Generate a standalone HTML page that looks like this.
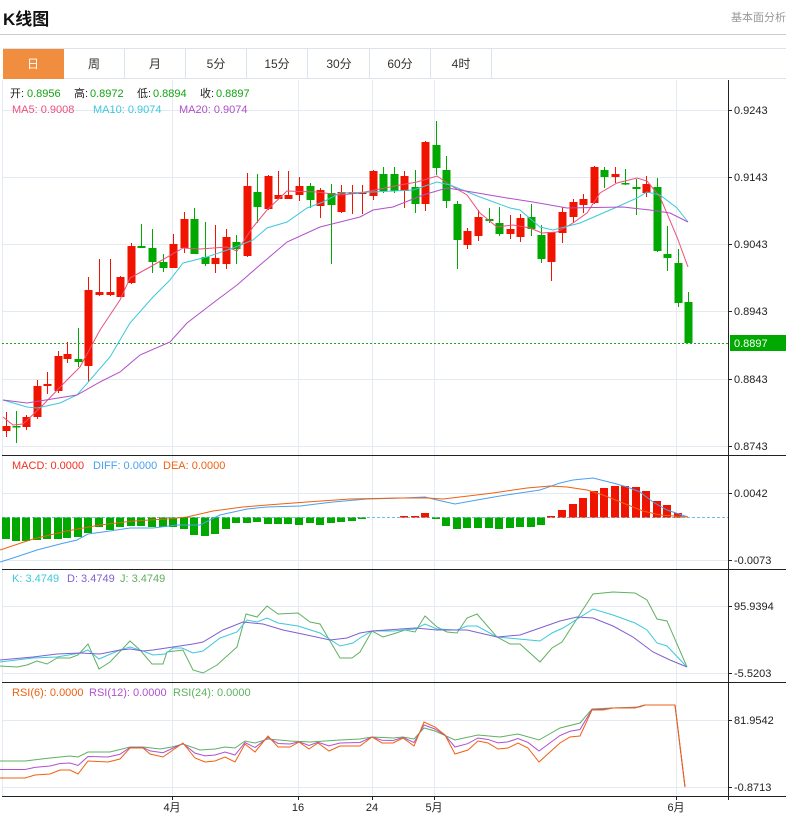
<!DOCTYPE html>
<html><head><meta charset="utf-8">
<style>
*{margin:0;padding:0;box-sizing:border-box}
body{width:786px;height:816px;background:#fff;font-family:"Liberation Sans","Noto Sans CJK SC",sans-serif;position:relative;overflow:hidden}
.t{position:absolute;white-space:nowrap}
#tabs{position:absolute;left:3px;top:48px;height:31px;width:783px;border-top:1px solid #dde3ea;border-bottom:1px solid #dde3ea}
.tab{position:absolute;top:0;height:30px;width:61px;border-right:1px solid #dde3ea;text-align:center;line-height:30px;font-size:12px;color:#333}
</style></head><body>
<div class="t" style="left:3px;top:5px;font-size:17px;font-weight:bold;color:#111">K线图</div>
<div class="t" style="left:731px;top:9px;font-size:11px;color:#999">基本面分析</div>
<div style="position:absolute;left:0;top:34px;width:786px;height:1px;background:#ccc"></div>
<div id="tabs">
<div class="tab" style="left:0;background:#f18d3f;color:#fff;border-right:1px solid #f18d3f">日</div>
<div class="tab" style="left:61px">周</div>
<div class="tab" style="left:122px">月</div>
<div class="tab" style="left:183px">5分</div>
<div class="tab" style="left:244px">15分</div>
<div class="tab" style="left:306px">30分</div>
<div class="tab" style="left:367px">60分</div>
<div class="tab" style="left:428px">4时</div>
</div>
<svg id="s" width="786" height="816" style="position:absolute;left:0;top:0" font-family="Liberation Sans, Noto Sans CJK SC, sans-serif"></svg>
<script>
var S=document.getElementById('s'),h='';
function L(x1,y1,x2,y2,c,w,d){h+='<line x1="'+x1+'" y1="'+y1+'" x2="'+x2+'" y2="'+y2+'" stroke="'+c+'" stroke-width="'+(w||1)+'"'+(d?' stroke-dasharray="'+d+'"':'')+'/>';}
function T(x,y,s,c,sz,a){h+='<text x="'+x+'" y="'+y+'" fill="'+c+'" font-size="'+(sz||11)+'"'+(a?' text-anchor="'+a+'"':'')+'>'+s+'</text>';}
function P(pts,c,w){h+='<polyline fill="none" stroke="'+c+'" stroke-width="'+(w||1)+'" points="'+pts.map(function(p){return p.join(',')}).join(' ')+'"/>';}
var G='#e4eaf1';
[110,177,244,311,379,446, 493,560, 606,673, 720,787].forEach(function(y){L(2,y+.5,728,y+.5,G);});
[172,298,372,434,676].forEach(function(x){L(x+.5,80,x+.5,796,G);});
L(2.5,80,2.5,796,G);
L(728.5,80,728.5,800,'#222');
[455,569,682,796].forEach(function(y){L(2,y+.5,786,y+.5,'#222');});
[[110,'0.9243'],[177,'0.9143'],[244,'0.9043'],[311,'0.8943'],[379,'0.8843'],[446,'0.8743'],[493,'0.0042'],[560,'-0.0073'],[606,'95.9394'],[673,'-5.5203'],[720,'81.9542'],[787,'-0.8713']].forEach(function(a){L(728,a[0]+.5,732,a[0]+.5,'#222');T(734,a[0]+4,a[1],'#222',11);});
[[172,'4月'],[298,'16'],[372,'24'],[434,'5月'],[676,'6月']].forEach(function(a){L(a[0]+.5,796,a[0]+.5,800,'#222');T(a[0],811,a[1],'#222',11,'middle');});
L(2,343.5,728,343.5,'#22a022',1,'2,2');
h+='<rect x="730" y="335" width="56" height="16" fill="#00a800"/>';T(734,347,'0.8897','#fff',11);
var C=[[6,'R',426,431,412,437],[16,'G',426,427,411,443],[26,'R',417,427,415,430],[37,'R',386,417,380,419],[47,'R',384,386,372,394],[58,'R',356,391,351,393],[67,'R',354,359,342,363],[78,'G',359,362,328,367],[88,'R',290,366,277,382],[99,'R',292,295,259,296],[110,'R',292,295,259,296],[120,'R',277,297,276,297],[131,'R',246,283,243,284],[141,'G',246,248,224,248],[152,'G',248,262,229,273],[163,'G',262,268,254,272],[173,'R',244,268,234,268],[184,'R',219,248,212,253],[194,'G',219,254,208,254],[205,'G',257,264,222,266],[215,'R',258,264,225,273],[226,'R',237,264,229,269],[236,'G',242,249,235,264],[247,'R',186,256,173,257],[257,'G',192,207,174,223],[268,'R',176,209,175,210],[278,'R',195,199,171,199],[288,'R',195,199,171,199],[299,'R',186,195,177,201],[310,'G',186,200,183,208],[320,'R',190,206,188,218],[331,'G',193,205,184,264],[341,'R',192,212,185,213],[352,'R',192,194,185,214],[362,'R',192,194,185,214],[373,'R',171,196,170,200],[383,'G',174,191,167,193],[394,'G',174,191,167,193],[404,'R',176,191,171,208],[415,'G',187,204,170,213],[425,'R',142,204,141,211],[436,'G',145,168,121,175],[446,'G',170,201,156,208],[457,'G',204,240,201,269],[467,'R',231,245,228,249],[478,'R',217,236,210,241],[489,'G',219,221,208,223],[499,'G',223,234,207,236],[510,'R',229,234,215,239],[520,'R',218,237,214,242],[531,'G',217,229,204,236],[541,'G',235,259,225,263],[551,'R',232,262,232,281],[562,'R',212,233,207,243],[573,'R',202,217,199,223],[583,'R',199,205,194,213],[594,'R',167,203,166,204],[604,'G',170,177,167,188],[615,'R',174,177,167,183],[625,'G',183,184,169,185],[636,'G',187,189,179,215],[646,'R',184,193,176,197],[657,'G',187,251,178,252],[667,'G',254,258,226,271],[678,'G',263,303,249,307],[688,'G',302,343,292,343]];
C.forEach(function(c){var col=c[1]=='R'?'#f01400':'#00a800';L(c[0]+.5,c[4],c[0]+.5,c[5],col);h+='<rect x="'+(c[0]-3.5)+'" y="'+c[2]+'" width="8" height="'+Math.max(1.5,c[3]-c[2])+'" fill="'+col+'"/>';});
P([[3,417],[13,425],[23,424],[40,408],[67,380],[80,367],[100,330],[120,300],[130,278],[150,267],[183,248],[200,249],[227,247],[237,251],[253,227],[267,210],[287,191],[317,192],[340,195],[360,193],[380,189],[400,185],[417,182],[437,176],[450,185],[467,195],[480,213],[497,227],[513,225],[530,228],[542,233],[557,232],[573,223],[587,213],[600,193],[617,183],[637,178],[647,181],[660,197],[677,237],[688,267]],'#ec4f7c');
P([[3,400],[27,407],[37,408],[60,403],[77,395],[90,380],[110,357],[130,323],[153,297],[170,280],[183,263],[207,257],[233,248],[253,240],[267,228],[287,222],[307,208],[323,202],[340,193],[373,192],[413,190],[437,182],[450,185],[480,197],[510,208],[520,210],[540,227],[553,230],[580,223],[617,207],[637,198],[647,192],[660,195],[677,208],[688,222]],'#3cc8dc');
P([[3,400],[27,403],[77,395],[100,382],[120,372],[140,355],[170,342],[187,323],[213,303],[237,285],[260,265],[287,242],[320,227],[340,222],[360,217],[373,210],[393,207],[423,195],[447,188],[460,190],[507,198],[533,202],[567,208],[623,207],[650,210],[670,213],[688,222]],'#b050c8');
T(10,97,'开:','#222',11);T(27,97,'0.8956','#13a313',11);T(74,97,'高:','#222',11);T(90,97,'0.8972','#13a313',11);T(137,97,'低:','#222',11);T(153,97,'0.8894','#13a313',11);T(200,97,'收:','#222',11);T(216,97,'0.8897','#13a313',11);
T(12,113,'MA5:  0.9008','#ec4f7c',11);T(93,113,'MA10:  0.9074','#3cc8dc',11);T(179,113,'MA20:  0.9074','#b050c8',11);
T(12,469,'MACD: 0.0000','#f03020',11);T(93,469,'DIFF: 0.0000','#4aa0f0',11);T(163,469,'DEA: 0.0000','#f06010',11);
T(12,582,'K: 3.4749','#3cc8dc',11);T(67,582,'D: 3.4749','#8060d0',11);T(120,582,'J: 3.4749','#60b060',11);
T(12,696,'RSI(6): 0.0000','#f06010',11);T(89,696,'RSI(12): 0.0000','#b050d0',11);T(173,696,'RSI(24): 0.0000','#60b060',11);
L(2,517.5,728,517.5,'#6cc0e8',1,'3,2');
var hb=[539,541,541,540,539,539,538,537,533,527,530,527,526,526,527,527,527,529,535,536,534,529,523,523,522,524,524,524,525,523,525,523,522,521,519,518,518,518,516,516,513,519,526,529,528,528,528,529,528,527,527,525,516,510,504,498,491,488,486,486,487,491,501,505,513,517];
hb.forEach(function(y,i){var x=C[i][0];var col=y>517?'#00a800':'#f01400';var t=Math.min(y,517.5),b=Math.max(y,517.5);if(b-t<1)return;h+='<rect x="'+(x-4)+'" y="'+t+'" width="8" height="'+(b-t)+'" fill="'+col+'"/>';});
P([[0,562],[13,558],[37,550],[60,544],[77,540],[88,534],[110,531],[130,528],[153,528],[177,525],[200,525],[220,515],[247,509],[267,507],[300,506],[333,502],[367,499],[403,498],[425,497],[437,500],[455,504],[477,500],[500,496],[520,493],[540,490],[560,483],[573,480],[593,478],[613,483],[627,487],[640,492],[653,502],[667,510],[688,517]],'#4aa0f0');
P([[0,550],[33,539],[67,531],[100,525],[133,521],[167,519],[187,517],[213,511],[243,507],[267,505],[307,502],[350,499],[400,498],[427,498],[443,499],[460,497],[493,493],[527,488],[550,486],[567,487],[587,490],[603,495],[623,503],[643,511],[660,515],[688,517]],'#f06010');
P([[0,666],[17,667],[27,665],[37,661],[47,664],[57,658],[70,658],[78,655],[88,644],[99,669],[110,662],[130,641],[140,650],[152,664],[163,664],[167,652],[183,650],[193,670],[203,673],[217,665],[237,647],[246,614],[257,617],[267,606],[278,614],[298,613],[310,622],[320,624],[340,658],[352,658],[360,652],[372,631],[383,637],[393,634],[405,630],[415,632],[425,616],[437,627],[447,632],[457,633],[467,618],[477,614],[497,637],[510,644],[520,644],[540,662],[552,648],[562,642],[593,594],[613,592],[635,593],[647,600],[657,619],[667,621],[687,667]],'#60b060');
P([[0,662],[33,658],[57,657],[80,653],[88,650],[99,659],[120,650],[130,647],[143,651],[153,655],[165,654],[173,648],[182,648],[193,653],[203,651],[220,638],[237,632],[247,620],[257,622],[267,618],[278,623],[298,626],[320,633],[340,646],[353,643],[360,638],[372,631],[393,631],[415,629],[425,624],[437,629],[457,630],[467,626],[477,626],[497,637],[540,641],[552,633],[563,628],[593,609],[613,615],[635,623],[647,630],[657,643],[667,646],[687,667]],'#3cc8dc');
P([[0,660],[33,657],[57,654],[80,653],[100,654],[120,650],[130,649],[143,651],[153,650],[173,647],[193,644],[203,642],[223,630],[243,622],[263,624],[283,630],[307,635],[330,640],[347,638],[360,633],[372,631],[415,628],[437,630],[467,630],[497,637],[520,635],[540,628],[560,621],[577,617],[593,618],[613,626],[633,637],[653,652],[670,660],[687,667]],'#8060d0');
var O=[[0,778],[25,778],[35,775],[50,774],[60,770],[70,770],[78,774],[88,761],[108,762],[120,759],[130,748],[143,748],[150,754],[163,757],[183,743],[195,758],[205,762],[215,761],[225,757],[235,762],[245,744],[255,752],[268,736],[278,747],[290,747],[299,742],[309,749],[318,743],[329,751],[340,746],[360,746],[372,737],[382,743],[393,743],[403,738],[414,746],[424,722],[435,727],[445,735],[455,754],[468,750],[478,741],[488,743],[498,749],[508,748],[518,743],[528,748],[539,762],[550,752],[560,743],[570,737],[580,736],[592,710],[603,710],[613,708],[635,708],[645,705],[675,705],[685,787]];
var Gr=[[0,761],[25,761],[50,758],[70,756],[78,757],[88,752],[110,752],[130,747],[143,747],[160,749],[172,747],[183,744],[200,750],[215,749],[225,747],[235,748],[245,741],[255,743],[268,739],[290,741],[310,742],[340,740],[360,739],[372,737],[393,738],[403,737],[414,739],[424,728],[435,731],[455,740],[478,735],[500,737],[518,734],[539,740],[560,728],[580,723],[592,709],[613,708],[640,707],[645,705],[675,705],[685,787]];
function at(a,x){for(var i=1;i<a.length;i++){if(x<=a[i][0]){var t=(x-a[i-1][0])/(a[i][0]-a[i-1][0]);return a[i-1][1]+t*(a[i][1]-a[i-1][1]);}}return a[a.length-1][1];}
var Pu=O.map(function(p){return [p[0],(p[1]+at(Gr,p[0]))/2];});
P(Gr,'#60b060');P(Pu,'#b050d0');P(O,'#f06010');
S.innerHTML=h;
</script>
</body></html>
